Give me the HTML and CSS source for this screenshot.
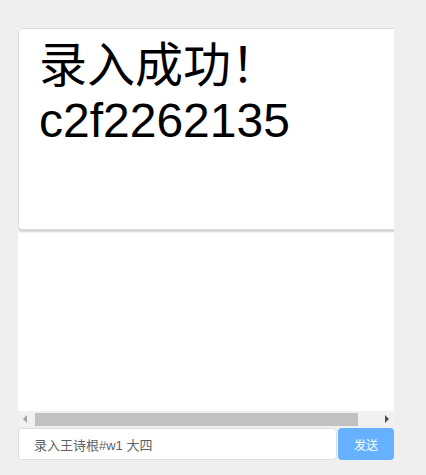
FILE: index.html
```html
<!DOCTYPE html>
<html lang="zh">
<head>
<meta charset="utf-8">
<link rel="stylesheet" href="styles.css">
</head>
<body>
<div class="page">
  <div class="messages">
    <div class="card">
      <div class="card-text">录入成功！<br>c2f2262135</div>
    </div>
  </div>
  <div class="hscroll">
    <div class="hscroll-btn"><span class="arrow arrow-left"></span></div>
    <div class="hscroll-track"><div class="hscroll-thumb"></div></div>
    <div class="hscroll-btn"><span class="arrow arrow-right"></span></div>
  </div>
  <div class="composer">
    <input class="composer-input" type="text" value="录入王诗根#w1 大四">
    <button class="composer-send" type="button">发送</button>
  </div>
</div>
</body>
</html>
```

FILE: styles.css
```css
html, body {
  margin: 0;
  padding: 0;
  background: #efefef;
}
body {
  font-family: "Liberation Sans", Arial, "Noto Sans CJK SC", sans-serif;
}
.page {
  padding: 28px 0 0 18px;
  width: 376px;
}
.messages {
  width: 376px;
  height: 383px;
  background: #fff;
  overflow: hidden;
}
.card {
  width: 403px;
  height: 202px;
  box-sizing: border-box;
  border: 1px solid #dcdcdc;
  border-radius: 4px;
  box-shadow: 0 2px 2px rgba(0, 0, 0, 0.18);
  background: #fff;
  padding: 9px 20px 0;
}
.card-text {
  font-size: 48px;
  color: #000;
  line-height: 55px;
  white-space: nowrap;
}
.hscroll {
  display: flex;
  height: 15px;
  background: #f1f1f1;
}
.hscroll-btn {
  width: 15px;
  height: 15px;
  display: flex;
  align-items: center;
  justify-content: center;
}
.hscroll-track {
  flex: 1;
  padding: 2px 0 0 2px;
  box-sizing: border-box;
}
.hscroll-thumb {
  width: 323px;
  height: 13px;
  background: #c1c1c1;
}
.arrow {
  width: 0;
  height: 0;
  border-top: 4px solid transparent;
  border-bottom: 4px solid transparent;
}
.arrow-left {
  border-right: 4px solid #a3a3a3;
  margin-left: -1px;
}
.arrow-right {
  border-left: 4px solid #505050;
  margin-left: 1px;
}
.composer {
  display: flex;
  margin-top: 2px;
  gap: 1px;
}
.composer-input {
  flex: 1;
  height: 32px;
  box-sizing: border-box;
  border: 1px solid #dcdfe6;
  border-radius: 4px;
  padding: 0 15px;
  font-family: "Liberation Sans", Arial, "Noto Sans CJK SC", sans-serif;
  font-size: 13px;
  color: #606266;
  outline: none;
  background: #fff;
  margin: 0;
}
.composer-send {
  width: 56px;
  height: 32px;
  border: none;
  border-radius: 4px;
  background: #66b1ff;
  color: #fff;
  font-family: "Liberation Sans", Arial, "Noto Sans CJK SC", sans-serif;
  font-size: 12px;
  padding: 0;
  margin: 0;
}
```
